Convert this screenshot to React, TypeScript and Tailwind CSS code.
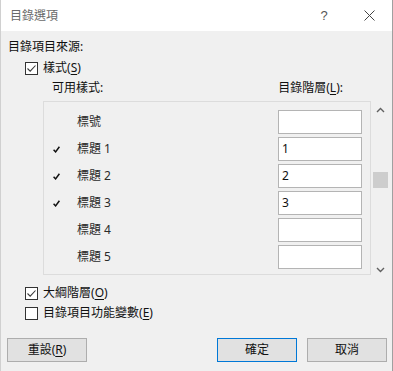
const font = "font-['Noto_Sans','Noto_Sans_CJK_TC',sans-serif]";

function Box({ checked }: { checked: boolean }) {
  return (
    <span className="w-[13px] h-[13px] border border-[#333333] bg-white flex items-center justify-center shrink-0">
      {checked && (
        <svg width="11" height="11" viewBox="0 0 11 11">
          <path d="M1.5 5.5 L4.2 8.2 L9.5 2.5" fill="none" stroke="#3a3a3a" strokeWidth="1.1" />
        </svg>
      )}
    </span>
  );
}

function CheckRow({ checked, label, accel, rest }: { checked: boolean; label: string; accel: string; rest?: string }) {
  return (
    <div className="flex items-center h-[16px] pl-[24px] gap-[5px]">
      <Box checked={checked} />
      <span className="leading-[16px]">
        {label}(<span className="underline underline-offset-2">{accel}</span>){rest}
      </span>
    </div>
  );
}

const styles = [
  { name: "標號", level: "", used: false },
  { name: "標題 1", level: "1", used: true },
  { name: "標題 2", level: "2", used: true },
  { name: "標題 3", level: "3", used: true },
  { name: "標題 4", level: "", used: false },
  { name: "標題 5", level: "", used: false },
];

function Chevron({ up }: { up: boolean }) {
  return (
    <svg width="9" height="6" viewBox="0 0 9 6">
      <path d={up ? "M1 5 L4.5 1.5 L8 5" : "M1 1 L4.5 4.5 L8 1"} fill="none" stroke="#606060" strokeWidth="1.4" />
    </svg>
  );
}

export default function App() {
  return (
    <div className={`w-[393px] h-[371px] flex flex-col border-l border-l-[#d0d0d0] border-r border-r-[#a0a0a0] bg-[#f0f0f0] text-[12px] text-[#111] ${font}`}>
      {/* Title bar */}
      <div className="h-[31px] bg-white flex items-center shrink-0">
        <span className="pl-[9px] text-[12px] text-[#6a6a6a] leading-[16px]">目錄選項</span>
        <span className="ml-auto w-[46px] h-[31px] flex items-center justify-center text-[13px] text-[#555] font-['Liberation_Sans',sans-serif] font-light">?</span>
        <span className="w-[45px] h-[31px] flex items-center justify-center">
          <svg width="11" height="11" viewBox="0 0 11 11">
            <path d="M0.5 0.5 L10.5 10.5 M10.5 0.5 L0.5 10.5" stroke="#444" strokeWidth="1" />
          </svg>
        </span>
      </div>

      {/* Body */}
      <div className="flex flex-col pt-[8px]">
        <div className="h-[16px] leading-[16px] pl-[7px]">目錄項目來源:</div>
        <div className="mt-[5px]">
          <CheckRow checked label="樣式" accel="S" />
        </div>
        <div className="mt-[4px] h-[16px] leading-[16px] flex pl-[51px]">
          <span>可用樣式:</span>
          <span className="ml-[175px]">
            目錄階層(<span className="underline underline-offset-2">L</span>):
          </span>
        </div>

        <div className="mt-[5px] flex items-start pl-[42px]">
          <div className="w-[328px] h-[174px] border border-[#dcdcdc] pt-[8px] flex flex-col gap-[3px]">
            {styles.map((s) => (
              <div key={s.name} className="flex items-center h-[24px]">
                <span className="w-[33px] pl-[9px] flex items-center">
                  {s.used && (
                    <svg width="7" height="7" viewBox="0 0 7 7">
                      <path d="M0.6 3.8 L2.6 5.9 L6.4 0.8" fill="none" stroke="#111" strokeWidth="1.5" />
                    </svg>
                  )}
                </span>
                <span className="flex-1 text-[#2a2a2a] leading-[16px]">{s.name}</span>
                <div className="w-[84px] h-[24px] mr-[8px] bg-white border border-[#b4b4b4] flex items-center pl-[3px] text-[12px] text-[#111]">
                  {s.level}
                </div>
              </div>
            ))}
          </div>
          <div className="w-[17px] h-[177px] ml-[1px] flex flex-col">
            <div className="h-[17px] flex items-center justify-center">
              <Chevron up />
            </div>
            <div className="mt-[54px] mx-[1px] h-[16px] bg-[#cdcdcd]" />
            <div className="flex-1" />
            <div className="h-[17px] flex items-center justify-center">
              <Chevron up={false} />
            </div>
          </div>
        </div>

        <div className="mt-[7px]">
          <CheckRow checked label="大綱階層" accel="O" />
        </div>
        <div className="mt-[4px]">
          <CheckRow checked={false} label="目錄項目功能變數" accel="E" />
        </div>

        <div className="mt-[17px] flex items-center pl-[6px] pr-[5px]">
          <button className="w-[80px] h-[24px] bg-[#e1e1e1] border border-[#adadad] leading-[16px]">
            重設(<span className="underline underline-offset-2">R</span>)
          </button>
          <button className="ml-auto w-[80px] h-[24px] bg-[#e1e1e1] border border-[#0078d7] leading-[16px]">確定</button>
          <button className="ml-[10px] w-[80px] h-[24px] bg-[#e1e1e1] border border-[#adadad] leading-[16px]">取消</button>
        </div>
      </div>
    </div>
  );
}
